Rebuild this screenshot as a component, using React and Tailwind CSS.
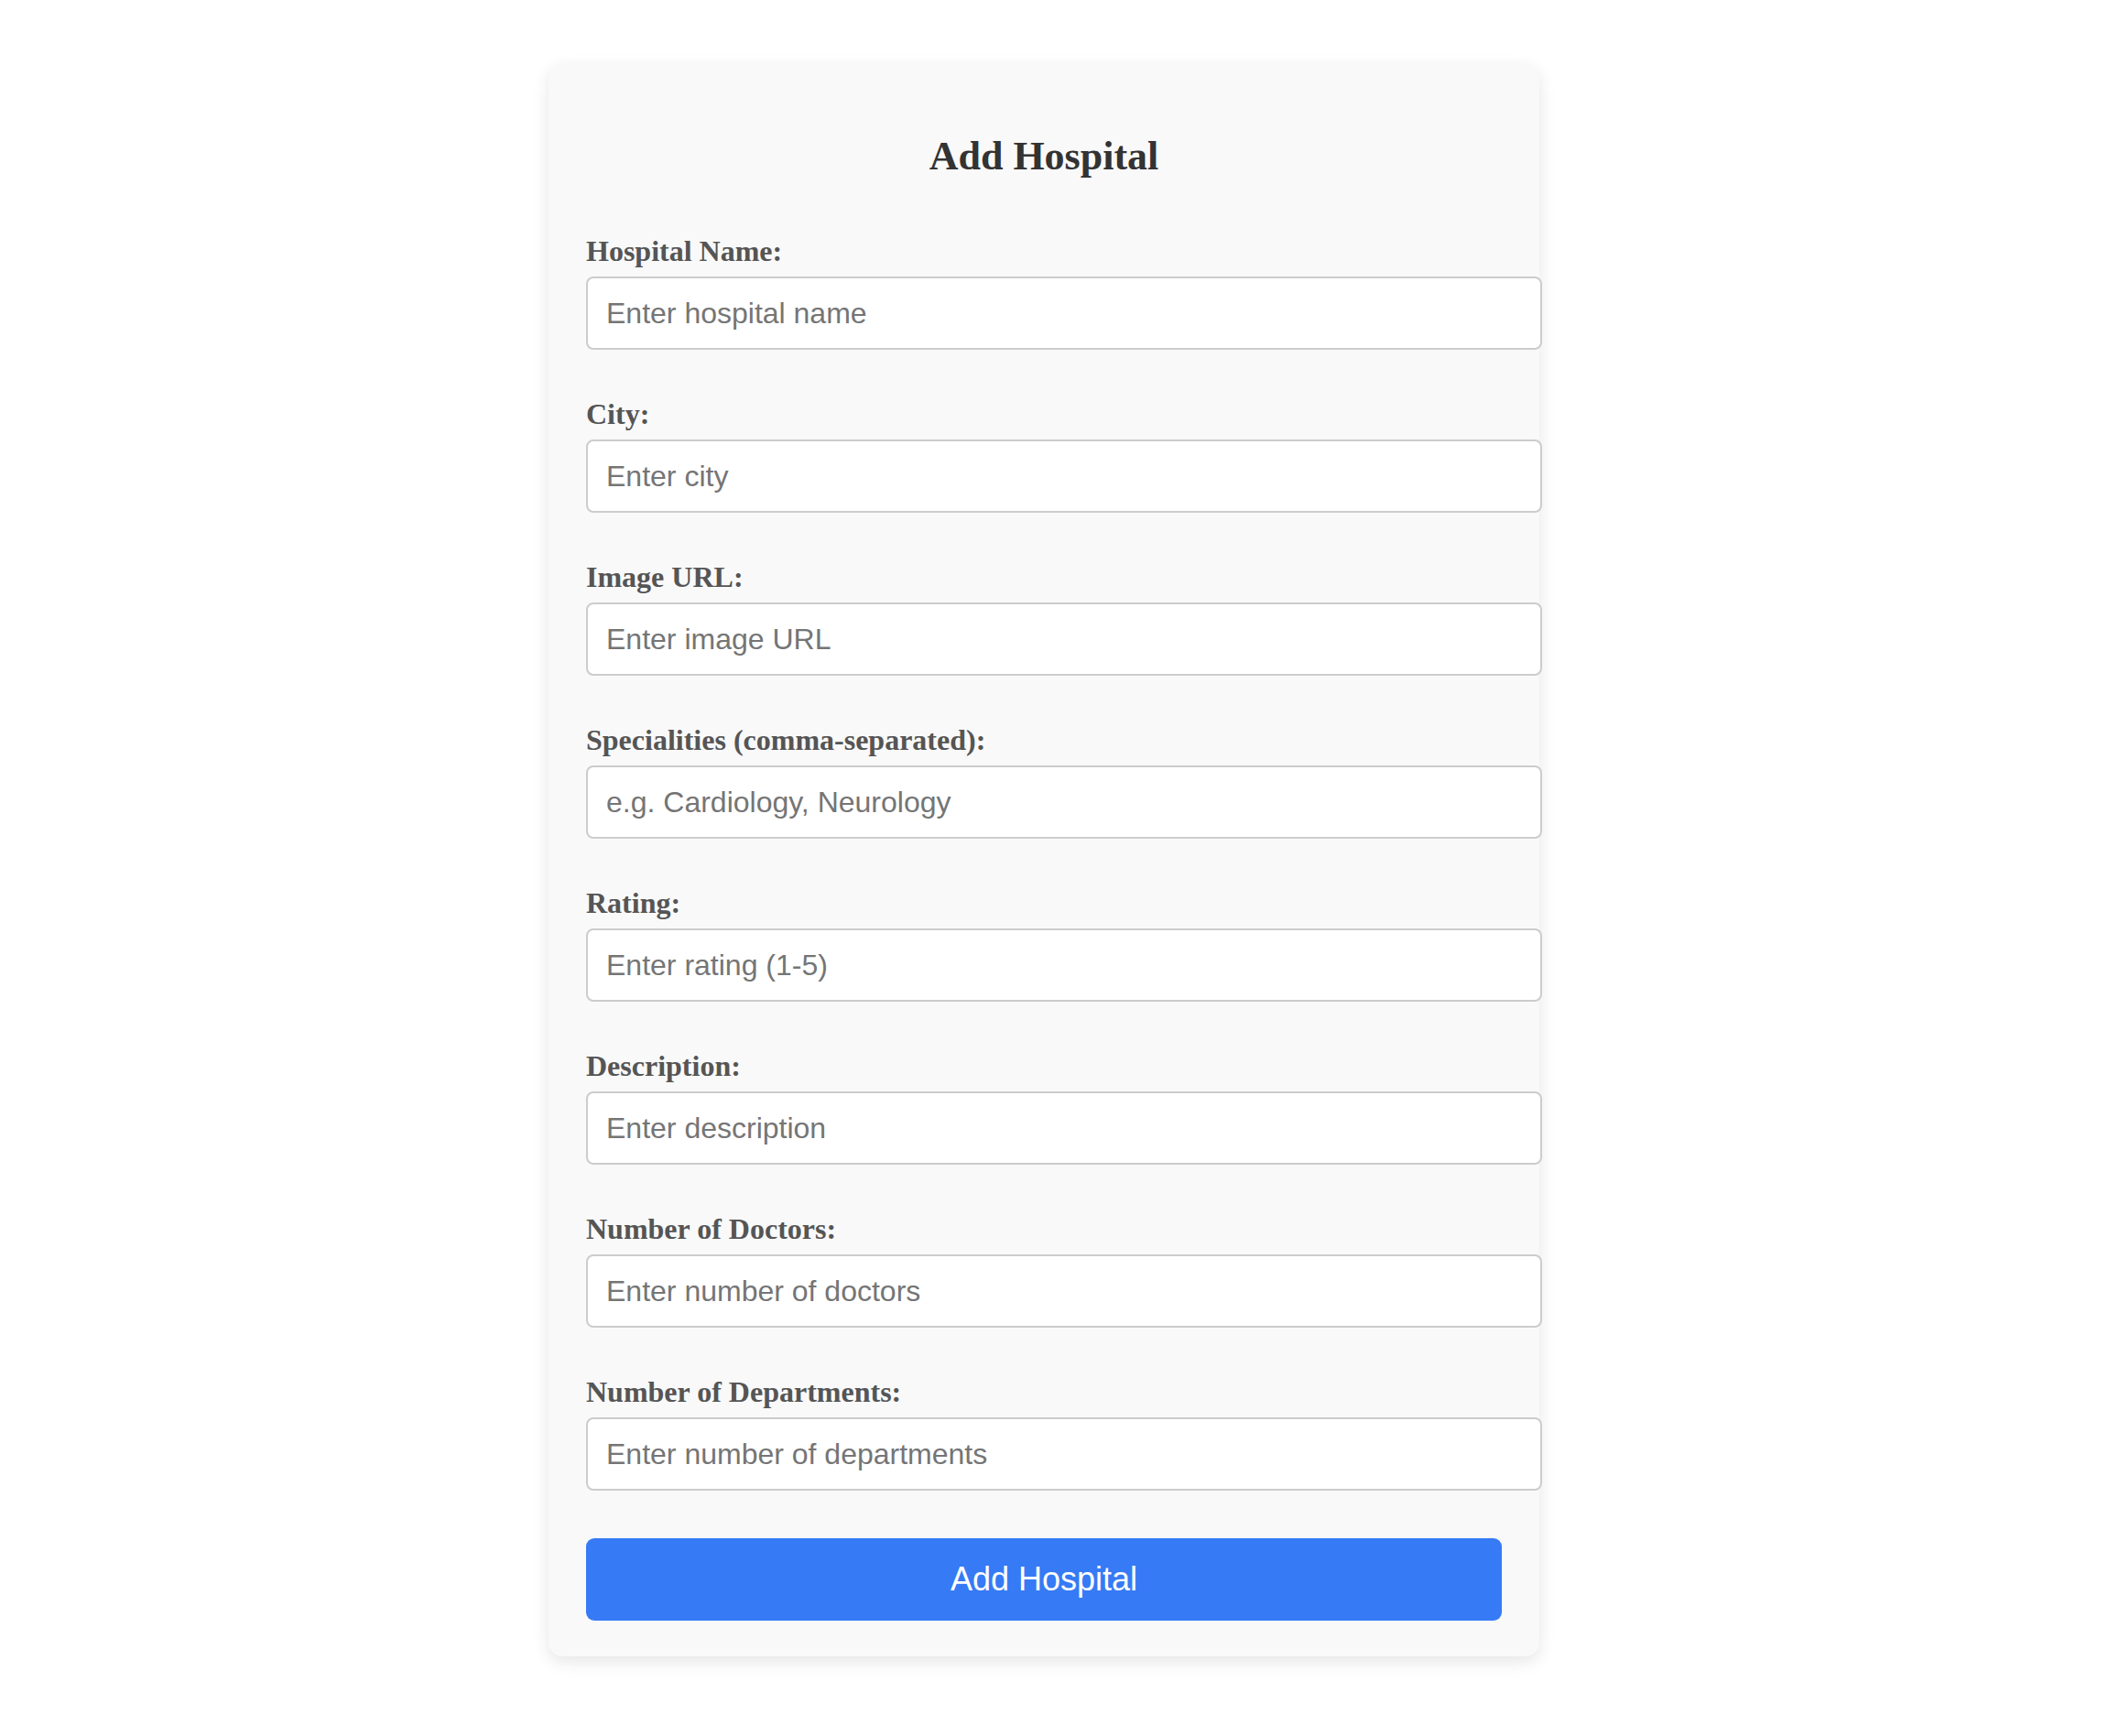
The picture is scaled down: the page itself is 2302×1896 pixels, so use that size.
import { useState } from "react";

const fields = [
  { name: "name", label: "Hospital Name:", placeholder: "Enter hospital name" },
  { name: "city", label: "City:", placeholder: "Enter city" },
  { name: "image", label: "Image URL:", placeholder: "Enter image URL" },
  {
    name: "specialities",
    label: "Specialities (comma-separated):",
    placeholder: "e.g. Cardiology, Neurology",
  },
  { name: "rating", label: "Rating:", placeholder: "Enter rating (1-5)" },
  { name: "description", label: "Description:", placeholder: "Enter description" },
  { name: "doctors", label: "Number of Doctors:", placeholder: "Enter number of doctors" },
  {
    name: "departments",
    label: "Number of Departments:",
    placeholder: "Enter number of departments",
  },
];

export default function App() {
  const [form, setForm] = useState({});

  const handleChange = (e) =>
    setForm({ ...form, [e.target.name]: e.target.value });

  return (
    <div className="min-h-[1896px] bg-white pt-[69px] pr-[22px] flex justify-center font-['Liberation_Serif',serif]">
      <form
        onSubmit={(e) => e.preventDefault()}
        className="w-[1082px] h-[1740px] bg-[#f9f9f9] rounded-[15px] shadow-[0_6px_18px_rgba(0,0,0,0.1)] px-[41px] pt-[75px] pb-[40px]"
      >
        <h2 className="text-[44px] leading-[53px] font-bold text-[#333] text-center mb-[59px]">
          Add Hospital
        </h2>

        {fields.map((f) => (
          <div key={f.name} className="mb-[52px] last:mb-[48px]">
            <label className="block text-[32px] leading-[36px] font-bold text-[#555] mb-[10px]">
              {f.label}
            </label>
            <input
              name={f.name}
              value={form[f.name] || ""}
              onChange={handleChange}
              placeholder={f.placeholder}
              className="block w-[1044px] h-[80px] px-[20px] bg-white border-2 border-[#ccc] rounded-[8px] text-[32px] font-['Liberation_Sans',Arial,sans-serif] text-[#333] placeholder:text-[#757575] outline-none"
            />
          </div>
        ))}

        <button
          type="submit"
          className="w-full h-[90px] bg-[#367af5] text-white rounded-[9px] text-[36px] font-['Liberation_Sans',Arial,sans-serif]"
        >
          Add Hospital
        </button>
      </form>
    </div>
  );
}
